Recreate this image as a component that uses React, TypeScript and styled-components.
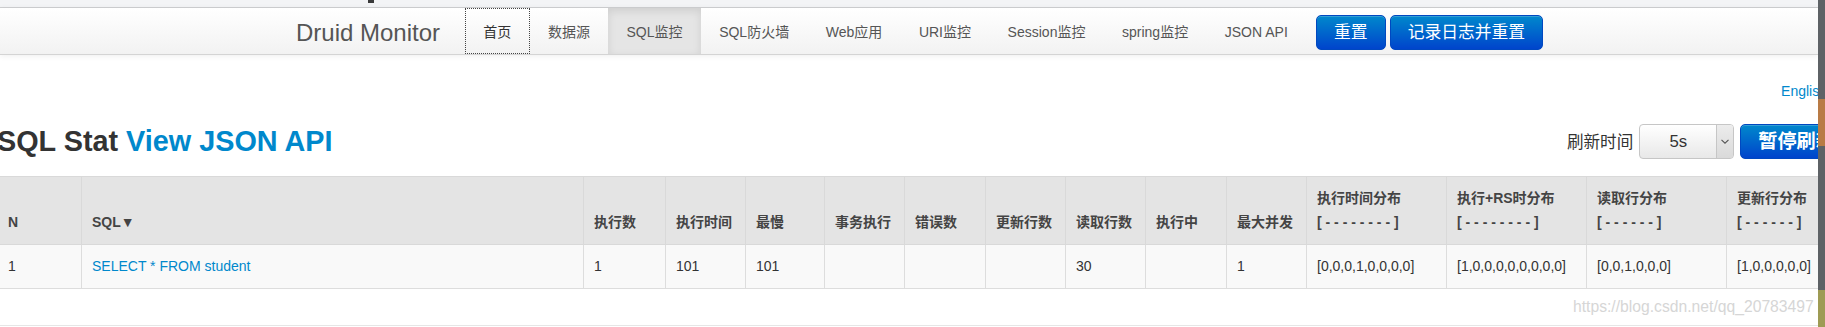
import React from "react";
import styled, { createGlobalStyle } from "styled-components";

const FONT = `"Liberation Sans", Arial, "Noto Sans CJK SC", sans-serif`;

const GlobalStyle = createGlobalStyle`
  html, body { margin: 0; padding: 0; background: #fff; }
  body { font-family: ${FONT}; color: #333; }
  * { box-sizing: border-box; }
`;

const Screen = styled.div`
  display: flex;
  width: 1825px;
  height: 327px;
  overflow: hidden;
`;

const Page = styled.div`
  position: relative;
  flex: 0 0 1818px;
  display: flex;
  flex-direction: column;
  overflow: hidden;
  background: #fff;
`;

const ScrollStrip = styled.div`
  flex: 0 0 7px;
  display: flex;
  flex-direction: column;
`;

const StripSegment = styled.div<{ $h: number; $c: string }>`
  flex: 0 0 ${(p) => p.$h}px;
  background: ${(p) => p.$c};
`;

const TopStrip = styled.div`
  height: 8px;
  flex: 0 0 8px;
  background: #f3f4f6;
  border-bottom: 1px solid #cfd0d2;
  padding-left: 368px;
`;

const TopMark = styled.div`
  width: 6px;
  height: 3px;
  background: #3a3a3a;
`;

const Navbar = styled.nav`
  position: relative;
  z-index: 1;
  flex: 0 0 47px;
  height: 47px;
  display: flex;
  align-items: stretch;
  padding-left: 296px;
  background: linear-gradient(#ffffff, #f2f2f2);
  border-bottom: 1px solid #d4d4d4;
  box-shadow: 0 1px 6px rgba(0, 0, 0, 0.07);
`;

const Brand = styled.a`
  font-size: 24px;
  color: #555;
  padding-top: 3px;
  line-height: 43px;
  margin-right: 25px;
  text-decoration: none;
  white-space: nowrap;
`;

const NavList = styled.ul`
  display: flex;
  margin: 0;
  padding: 0;
  list-style: none;
`;

const NavItem = styled.li<{ $active?: boolean; $focused?: boolean }>`
  padding: 2px 18.3px 0;
  line-height: 44px;
  font-size: 14px;
  white-space: nowrap;
  color: ${(p) => (p.$focused ? "#333" : "#555")};
  background: ${(p) => (p.$active ? "#e5e5e5" : "transparent")};
  box-shadow: ${(p) => (p.$active ? "inset 0 3px 8px rgba(0,0,0,0.1)" : "none")};
  outline: ${(p) => (p.$focused ? "1px dotted #444" : "none")};
  outline-offset: -1px;
`;

const NavButtons = styled.div`
  display: flex;
  align-items: flex-start;
  gap: 4px;
  margin-left: 10px;
  padding-top: 7px;
`;

const PrimaryButton = styled.button<{ $bold?: boolean; $size?: number }>`
  height: 35px;
  padding: 0 17px;
  font-family: ${FONT};
  font-size: ${(p) => p.$size ?? 16.8}px;
  font-weight: ${(p) => (p.$bold ? 700 : 400)};
  line-height: 33px;
  color: #fff;
  white-space: nowrap;
  border: 1px solid #0048c0;
  border-radius: 5px;
  background: linear-gradient(#0088cc, #0044cc);
  box-shadow: inset 0 1px 0 rgba(255, 255, 255, 0.2);
`;

const Main = styled.main`
  margin-left: -3px;
  width: 1869px;
  padding-top: 26px;
`;

const LangRow = styled.div`
  display: flex;
  justify-content: flex-end;
  padding-right: 39px;
  font-size: 14px;
  line-height: 20px;
`;

const Link = styled.a`
  color: #0088cc;
  text-decoration: none;
`;

const TitleRow = styled.div`
  display: flex;
  align-items: center;
  height: 40px;
  margin-top: 20px;
  padding-right: 13px;
`;

const Title = styled.h3`
  margin: 0;
  font-size: 28.8px;
  font-weight: 700;
  line-height: 40px;
  color: #333;
  white-space: nowrap;
`;

const RefreshGroup = styled.div`
  margin-left: auto;
  display: flex;
  align-items: center;
  gap: 6px;
`;

const RefreshLabel = styled.span`
  font-size: 16.6px;
  color: #333;
  white-space: nowrap;
`;

const SelectBox = styled.div`
  display: flex;
  width: 95px;
  height: 35px;
  border: 1px solid #c6c6c6;
  border-radius: 4px;
  overflow: hidden;
  background: linear-gradient(#ffffff, #e8e8e8);
`;

const SelectValue = styled.span`
  flex: 1;
  text-align: center;
  font-size: 16.8px;
  line-height: 33px;
  color: #333;
`;

const SelectArrow = styled.span`
  flex: 0 0 17px;
  display: flex;
  align-items: center;
  justify-content: center;
  border-left: 1px solid #c6c6c6;
  background: linear-gradient(#ececec, #dadada);
`;

const StatTable = styled.table`
  margin-top: 15px;
  width: 1869px;
  border-collapse: collapse;
  table-layout: fixed;
`;

const HeadCell = styled.th`
  background: #e4e4e4;
  border: 1px solid #d9d9d9;
  padding: 9px 10px 10px;
  line-height: 24px;
  font-size: 14px;
  font-weight: 700;
  color: #444;
  text-align: left;
  vertical-align: bottom;
  white-space: nowrap;
  overflow: hidden;
`;

const HeadSub = styled.span`
  display: block;
`;

const BodyCell = styled.td`
  background: #f9f9f9;
  border: 1px solid #dddddd;
  padding: 9px 10px 10px;
  line-height: 24px;
  font-size: 14px;
  color: #333;
  white-space: nowrap;
  overflow: hidden;
`;

const Footer = styled.div`
  margin-top: 36px;
  height: 3px;
  border-top: 1px solid #e6e6e6;
`;

const Watermark = styled.div`
  position: absolute;
  left: 1573px;
  top: 297px;
  font-size: 15.7px;
  line-height: 20px;
  color: #d6d6d6;
  white-space: nowrap;
`;

type Col = { w: number; label: string; sub?: string };

const DASH8 = "[ - - - - - - - - ]";
const DASH6 = "[ - - - - - - ]";

const columns: Col[] = [
  { w: 84, label: "N" },
  { w: 502, label: "SQL▼" },
  { w: 82, label: "执行数" },
  { w: 80, label: "执行时间" },
  { w: 79, label: "最慢" },
  { w: 80, label: "事务执行" },
  { w: 81, label: "错误数" },
  { w: 80, label: "更新行数" },
  { w: 80, label: "读取行数" },
  { w: 81, label: "执行中" },
  { w: 80, label: "最大并发" },
  { w: 140, label: "执行时间分布", sub: DASH8 },
  { w: 140, label: "执行+RS时分布", sub: DASH8 },
  { w: 140, label: "读取行分布", sub: DASH6 },
  { w: 140, label: "更新行分布", sub: DASH6 },
];

const row: string[] = [
  "1",
  "SELECT * FROM student",
  "1",
  "101",
  "101",
  "",
  "",
  "",
  "30",
  "",
  "1",
  "[0,0,0,1,0,0,0,0]",
  "[1,0,0,0,0,0,0,0,0]",
  "[0,0,1,0,0,0]",
  "[1,0,0,0,0,0]",
];

const navItems = [
  "首页",
  "数据源",
  "SQL监控",
  "SQL防火墙",
  "Web应用",
  "URI监控",
  "Session监控",
  "spring监控",
  "JSON API",
];

const Chevron = () => (
  <svg width="8" height="5" viewBox="0 0 8 5">
    <path d="M0.5 0.8 L4 4.2 L7.5 0.8" fill="none" stroke="#555" strokeWidth="1.1" />
  </svg>
);

export default function App() {
  return (
    <>
      <GlobalStyle />
      <Screen>
        <Page>
          <TopStrip>
            <TopMark />
          </TopStrip>
          <Navbar>
            <Brand>Druid Monitor</Brand>
            <NavList>
              {navItems.map((item, i) => (
                <NavItem key={item} $focused={i === 0} $active={i === 2}>
                  {item}
                </NavItem>
              ))}
            </NavList>
            <NavButtons>
              <PrimaryButton>重置</PrimaryButton>
              <PrimaryButton>记录日志并重置</PrimaryButton>
            </NavButtons>
          </Navbar>
          <Main>
            <LangRow>
              <Link>English</Link>
            </LangRow>
            <TitleRow>
              <Title>
                SQL Stat <Link>View JSON API</Link>
              </Title>
              <RefreshGroup>
                <RefreshLabel>刷新时间</RefreshLabel>
                <SelectBox>
                  <SelectValue>5s</SelectValue>
                  <SelectArrow>
                    <Chevron />
                  </SelectArrow>
                </SelectBox>
                <PrimaryButton $bold $size={19.2}>
                  暂停刷新
                </PrimaryButton>
              </RefreshGroup>
            </TitleRow>
            <StatTable>
              <colgroup>
                {columns.map((c, i) => (
                  <col key={i} style={{ width: c.w }} />
                ))}
              </colgroup>
              <thead>
                <tr>
                  {columns.map((c, i) => (
                    <HeadCell key={i}>
                      {c.sub ? (
                        <>
                          <HeadSub>{c.label}</HeadSub>
                          <HeadSub>{c.sub}</HeadSub>
                        </>
                      ) : (
                        c.label
                      )}
                    </HeadCell>
                  ))}
                </tr>
              </thead>
              <tbody>
                <tr>
                  {row.map((v, i) => (
                    <BodyCell key={i}>{i === 1 ? <Link>{v}</Link> : v}</BodyCell>
                  ))}
                </tr>
              </tbody>
            </StatTable>
            <Footer />
          </Main>
          <Watermark>https://blog.csdn.net/qq_20783497</Watermark>
        </Page>
        <ScrollStrip>
          <StripSegment $h={99} $c="#5e6266" />
          <StripSegment $h={47} $c="#b97b45" />
          <StripSegment $h={144} $c="#5e6266" />
          <StripSegment $h={37} $c="#9e9b54" />
        </ScrollStrip>
      </Screen>
    </>
  );
}
